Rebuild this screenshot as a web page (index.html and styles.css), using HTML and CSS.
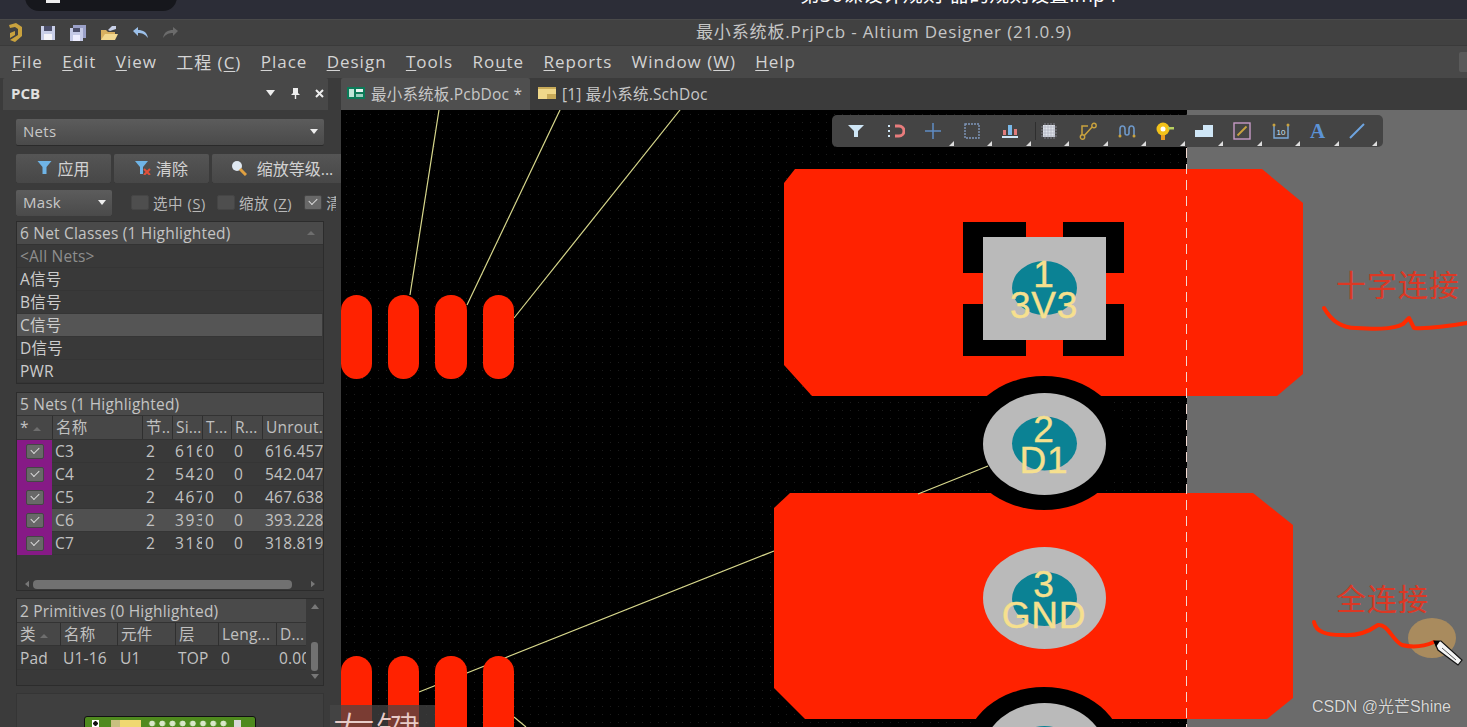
FILE: index.html
```html
<!DOCTYPE html>
<html lang="zh">
<head>
<meta charset="utf-8">
<title>Altium Designer</title>
<link rel="stylesheet" href="styles.css">
</head>
<body>
<div class="app">
  <div class="player">
    <div class="pill"><span class="pill-icon"></span></div>
    <div class="video-title">第30课设计规则-器的规则设置.mp4</div>
  </div>
  <div class="titlebar">
    <div class="quick">
      <svg class="logo" viewBox="0 0 16 20" width="16" height="20"><path d="M2 2 L9 0 L15 4 L15 13 L8 19 L3 17 L11 12 L11 6 L8 4 L3 5Z M3 10 L8 8 L8 12 L3 15Z" fill="#c9a23e"/></svg>
      <svg viewBox="0 0 16 16" width="16" height="16"><rect x="1" y="1" width="14" height="14" fill="#c9cfe8"/><rect x="4" y="1" width="8" height="5" fill="#4c4f6a"/><rect x="4" y="9" width="8" height="6" fill="#f4f4f8"/></svg>
      <svg viewBox="0 0 18 16" width="18" height="16"><rect x="4" y="0" width="13" height="13" fill="#9aa0c8"/><rect x="1" y="3" width="13" height="13" fill="#c4c9e6"/><rect x="4" y="3" width="7" height="4" fill="#4c4f6a"/><rect x="4" y="10" width="7" height="6" fill="#eef"/></svg>
      <svg viewBox="0 0 18 16" width="18" height="16"><path d="M1 5 H6 L8 7 H15 V15 H1Z" fill="#d8b060"/><path d="M5 9 H18 L15 15 H1Z" fill="#f2d890"/><path d="M8 5 L12 1 H16 V4 L10 6Z" fill="#c8d0e8"/></svg>
      <svg viewBox="0 0 18 14" width="18" height="14"><path d="M2 5 L7 1 V4 C12 4 16 6 17 12 C14 8 11 7 7 7 V10Z" fill="#9cc0ea"/></svg>
      <svg viewBox="0 0 18 14" width="18" height="14"><path d="M16 5 L11 1 V4 C6 4 2 6 1 12 C4 8 7 7 11 7 V10Z" fill="#6b6b6b"/></svg>
    </div>
    <div class="doc-title">最小系统板.PrjPcb - Altium Designer (21.0.9)</div>
  </div>
  <div class="menubar">
    <span class="menu"><u>F</u>ile</span>
    <span class="menu"><u>E</u>dit</span>
    <span class="menu"><u>V</u>iew</span>
    <span class="menu">工程 (<u>C</u>)</span>
    <span class="menu"><u>P</u>lace</span>
    <span class="menu"><u>D</u>esign</span>
    <span class="menu"><u>T</u>ools</span>
    <span class="menu">Ro<u>u</u>te</span>
    <span class="menu"><u>R</u>eports</span>
    <span class="menu">Window (<u>W</u>)</span>
    <span class="menu"><u>H</u>elp</span>
    <span class="menu-end"></span>
  </div>
  <div class="main">
    <aside class="panel">
      <div class="panel-head">
        <span class="panel-name">PCB</span>
        <span class="head-icons">
          <svg viewBox="0 0 9 6" width="9" height="6"><path d="M0 0H9L4.5 6Z" fill="#eee"/></svg>
          <svg viewBox="0 0 9 11" width="9" height="11"><path d="M2 0H7V5L9 7H5.2V11H3.8V7H0L2 5Z" fill="#eee"/></svg>
          <svg viewBox="0 0 9 9" width="9" height="9"><path d="M1 1L8 8M8 1L1 8" stroke="#eee" stroke-width="2"/></svg>
        </span>
      </div>
      <div class="panel-body">
        <div class="select wide"><span>Nets</span><i class="caret"></i></div>
        <div class="btn-row">
          <div class="btn b1"><svg viewBox="0 0 14 13" width="15" height="13"><path d="M0 0H14L9 6V13H5V6Z" fill="#6fb4e6"/></svg>应用</div>
          <div class="btn b2"><svg viewBox="0 0 16 14" width="16" height="14"><path d="M0 0H13L8 6V13H5V6Z" fill="#6fb4e6"/><path d="M9 8L15 14M15 8L9 14" stroke="#e0503a" stroke-width="2"/></svg>清除</div>
          <div class="btn b3"><svg viewBox="0 0 16 16" width="16" height="16"><circle cx="6" cy="6" r="5" fill="#dfe8f2"/><path d="M9 9L15 15" stroke="#e0a040" stroke-width="3"/></svg><span>缩放等级...</span></div>
        </div>
        <div class="opt-row">
          <div class="select mask"><span>Mask</span><i class="caret"></i></div>
          <div class="opt o1"><i class="box"></i><span>选中 (<u>S</u>)</span></div>
          <div class="opt o2"><i class="box"></i><span>缩放 (<u>Z</u>)</span></div>
          <div class="opt o3"><i class="box on"></i><span>清</span></div>
        </div>

        <section class="list classes">
          <div class="list-head"><span>6 Net Classes (1 Highlighted)</span><i class="sort"></i></div>
          <div class="row dim">&lt;All Nets&gt;</div>
          <div class="row">A信号</div>
          <div class="row">B信号</div>
          <div class="row sel">C信号</div>
          <div class="row">D信号</div>
          <div class="row">PWR</div>
        </section>

        <section class="list nets">
          <div class="list-head"><span>5 Nets (1 Highlighted)</span></div>
          <div class="cols net-grid th">
            <span>* <i class="sort"></i></span><span>名称</span><span>节..</span><span>Si...</span><span>T...</span><span>R...</span><span>Unrout.</span>
          </div>
          <div class="cols net-grid tr"><span class="chk"><i class="box on"></i></span><span>C3</span><span>2</span><span>616</span><span>0</span><span>0</span><span>616.457</span></div>
          <div class="cols net-grid tr"><span class="chk"><i class="box on"></i></span><span>C4</span><span>2</span><span>542</span><span>0</span><span>0</span><span>542.047</span></div>
          <div class="cols net-grid tr"><span class="chk"><i class="box on"></i></span><span>C5</span><span>2</span><span>467</span><span>0</span><span>0</span><span>467.638</span></div>
          <div class="cols net-grid tr hl"><span class="chk"><i class="box on"></i></span><span>C6</span><span>2</span><span>393</span><span>0</span><span>0</span><span>393.228</span></div>
          <div class="cols net-grid tr"><span class="chk"><i class="box on"></i></span><span>C7</span><span>2</span><span>318</span><span>0</span><span>0</span><span>318.819</span></div>
          <div class="hscroll">
            <svg viewBox="0 0 5 8" width="5" height="8"><path d="M5 0V8L0 4Z" fill="#777"/></svg>
            <i class="hthumb"></i>
            <svg viewBox="0 0 5 8" width="5" height="8"><path d="M0 0V8L5 4Z" fill="#777"/></svg>
          </div>
        </section>

        <section class="list prims">
          <div class="prim-main">
            <div class="list-head"><span>2 Primitives (0 Highlighted)</span></div>
            <div class="cols prim-grid th"><span>类 <i class="sort"></i></span><span>名称</span><span>元件</span><span>层</span><span>Leng...</span><span>D...</span></div>
            <div class="cols prim-grid tr"><span>Pad</span><span>U1-16</span><span>U1</span><span>TOP</span><span>0</span><span>0.00</span></div>
          </div>
          <div class="vscroll">
            <svg viewBox="0 0 8 5" width="8" height="5"><path d="M0 5H8L4 0Z" fill="#777"/></svg>
            <i class="vthumb"></i>
            <svg viewBox="0 0 8 5" width="8" height="5"><path d="M0 0H8L4 5Z" fill="#777"/></svg>
          </div>
        </section>

        <section class="preview">
          <div class="board">
            <i class="bd-pin"></i><i class="bd-chip"></i><i class="dots"></i><i class="bd-end"></i>
          </div>
        </section>
      </div>
    </aside>

    <div class="work">
      <div class="tabs">
        <div class="tab active">
          <svg viewBox="0 0 18 12" width="18" height="12"><rect width="18" height="12" fill="#0c7a58"/><rect x="2" y="2" width="5" height="8" fill="#bfe6d8"/><rect x="9" y="2" width="7" height="3" fill="#e8f4f0"/><rect x="9" y="7" width="7" height="3" fill="#9bd0c0"/></svg>
          <span>最小系统板.PcbDoc *</span>
        </div>
        <div class="tab">
          <svg viewBox="0 0 18 12" width="18" height="12"><rect width="18" height="12" fill="#f0d88a"/><rect x="0" y="0" width="18" height="2" fill="#c8aa58"/><rect x="9" y="7" width="9" height="5" fill="#c8aa58"/></svg>
          <span>[1] 最小系统.SchDoc</span>
        </div>
      </div>
      <div class="canvas">
        <svg class="pcb" viewBox="341 110 1126 617" width="1126" height="617">
          <defs>
            <pattern id="grid" width="8" height="8" patternUnits="userSpaceOnUse"><rect x="2" y="2" width="1" height="1" fill="#1c1c1c"/></pattern>
          </defs>
          <rect x="341" y="110" width="846" height="617" fill="#000"/>
          <rect x="341" y="110" width="846" height="617" fill="url(#grid)"/>
          <rect x="1187" y="110" width="280" height="617" fill="#6b6b6b"/>

          <g class="rats">
            <line x1="439" y1="110" x2="410" y2="295"/>
            <line x1="560" y1="110" x2="467" y2="305"/>
            <line x1="680" y1="110" x2="514" y2="318"/>
            <line x1="774" y1="551" x2="419" y2="692"/>
            <line x1="514" y1="717" x2="526" y2="727"/>
          </g>

          <g class="red">
            <rect x="341" y="295" width="31" height="84" rx="15.5"/>
            <rect x="388" y="295" width="31" height="84" rx="15.5"/>
            <rect x="435" y="295" width="32" height="84" rx="15.5"/>
            <rect x="483" y="295" width="31" height="84" rx="15.5"/>
            <rect x="341" y="656" width="31" height="100" rx="15.5"/>
            <rect x="388" y="656" width="31" height="100" rx="15.5"/>
            <rect x="435" y="656" width="32" height="100" rx="15.5"/>
            <rect x="483" y="656" width="31" height="100" rx="15.5"/>
            <path d="M795 169H1262L1303 203V374L1277 396H812L784 365V183Z"/>
            <path d="M790 493H1253L1293 525V698L1267 719H805L774 688V508Z"/>
          </g>

          <g class="clear">
            <ellipse cx="1044" cy="443" rx="80" ry="67"/>
            <ellipse cx="1044" cy="754" rx="80" ry="67"/>
            <rect x="963" y="222" width="161" height="134"/>
          </g>
          <rect class="cross" x="1026" y="222" width="37" height="134"/>
          <rect class="cross" x="963" y="273" width="161" height="31"/>

          <g class="rats"><line x1="988" y1="466" x2="918" y2="494"/></g>

          <rect class="pad" x="983" y="237" width="123" height="103"/>
          <ellipse class="pad" cx="1044.5" cy="444" rx="61.5" ry="51"/>
          <ellipse class="pad" cx="1044.5" cy="598" rx="61.5" ry="51"/>
          <ellipse class="pad" cx="1044.5" cy="754" rx="61.5" ry="51"/>
          <ellipse class="hole" cx="1044.5" cy="288" rx="32.5" ry="27"/>
          <ellipse class="hole" cx="1044.5" cy="443.5" rx="32.5" ry="27"/>
          <ellipse class="hole" cx="1044.5" cy="599" rx="32.5" ry="27"/>
          <ellipse class="hole" cx="1044.5" cy="753" rx="32.5" ry="27"/>

          <g class="padtxt">
            <text x="1044" y="287">1</text>
            <text x="1044" y="318">3V3</text>
            <text x="1044" y="442">2</text>
            <text x="1044" y="473">D1</text>
            <text x="1044" y="597">3</text>
            <text x="1044" y="628">GND</text>
          </g>

          <line class="edge" x1="1186.5" y1="148" x2="1186.5" y2="727"/>

          <g class="note">
            <text x="1336" y="296">十字连接</text>
            <text x="1336" y="610">全连接</text>
          </g>
          <path class="ink" d="M1324 308C1332 322 1342 328 1356 328C1372 329 1392 330 1403 324L1409 318L1414 328C1430 329 1450 326 1467 323"/>
          <ellipse class="halo" cx="1432" cy="638" rx="24" ry="20"/>
          <path class="ink" d="M1314 622C1316 632 1326 635 1342 635C1358 636 1368 632 1378 625C1388 624 1392 640 1402 645C1414 648 1425 646 1434 642"/>
          <g class="pencil">
            <path d="M1434 641L1441 641L1462 660L1458 665L1438 650Z" fill="#f4f4f4" stroke="#111" stroke-width="1.2"/>
            <path d="M1434 641L1440 641L1436 647Z" fill="#000"/>
            <path d="M1442 648L1456 660" stroke="#555" stroke-width="1"/>
          </g>
        </svg>
        <div class="toolbar">
          <span class="tool"><svg viewBox="0 0 16 14" width="16" height="14"><path d="M0 1H16L10 7V13H6V7Z" fill="#cfe6f6"/></svg></span>
          <span class="tool"><svg viewBox="0 0 18 14" width="18" height="14"><path d="M8 2H12A5 5 0 0 1 12 12H8" fill="none" stroke="#e87c7c" stroke-width="3"/><path d="M1 2H3M1 7H3M1 12H3" stroke="#cfe6f6" stroke-width="2"/></svg></span>
          <span class="tool more"><svg viewBox="0 0 16 16" width="16" height="16"><path d="M8 0V16M0 8H16" stroke="#5f8cc4" stroke-width="1.5"/></svg></span>
          <span class="tool more"><svg viewBox="0 0 16 16" width="16" height="16"><rect x="1" y="1" width="14" height="14" fill="none" stroke="#7f97ba" stroke-width="1.4" stroke-dasharray="2 1"/></svg></span>
          <span class="tool more sep"><svg viewBox="0 0 16 14" width="16" height="14"><rect x="1" y="6" width="3" height="5" fill="#e07c7c"/><rect x="6" y="1" width="4" height="10" fill="#79b8e8"/><rect x="12" y="5" width="3" height="6" fill="#e07c7c"/><rect x="0" y="12" width="16" height="2" fill="#cfe6f6"/></svg></span>
          <span class="tool more"><svg viewBox="0 0 16 16" width="16" height="16"><rect x="2" y="2" width="12" height="12" fill="#dfe4ea"/><path d="M4 0V16M7 0V16M10 0V16M13 0V16M0 4H16M0 7H16M0 10H16M0 13H16" stroke="#aab" stroke-width=".6"/></svg></span>
          <span class="tool more"><svg viewBox="0 0 18 18" width="18" height="18"><path d="M3 15V4H9M4 15L14 4" fill="none" stroke="#c9a23e" stroke-width="1.5"/><circle cx="3.5" cy="15" r="2.2" fill="#444" stroke="#c9a23e" stroke-width="1.4"/><circle cx="15" cy="3.5" r="2.2" fill="#444" stroke="#c9a23e" stroke-width="1.4"/></svg></span>
          <span class="tool more"><svg viewBox="0 0 18 14" width="18" height="14"><path d="M2 11V5Q2 2 4.5 2T7 5V9Q7 11 9 11T11 9V5Q11 2 13.5 2T16 5V11" fill="none" stroke="#6e98c8" stroke-width="1.6"/><circle cx="2" cy="12" r="1.5" fill="#c9a23e"/><circle cx="16" cy="12" r="1.5" fill="#c9a23e"/></svg></span>
          <span class="tool more"><svg viewBox="0 0 18 18" width="18" height="18"><circle cx="7" cy="7" r="6.5" fill="#f2c21a"/><circle cx="7" cy="7" r="2.5" fill="#fff"/><rect x="12" y="5" width="6" height="2.5" fill="#b8d060"/><rect x="5" y="13" width="4" height="5" fill="#e89a20"/></svg></span>
          <span class="tool more"><svg viewBox="0 0 18 12" width="18" height="12"><path d="M0 12V5H8V0H18V12Z" fill="#cfe6f6"/></svg></span>
          <span class="tool more"><svg viewBox="0 0 18 18" width="18" height="18"><rect x="1" y="1" width="16" height="16" fill="#444" stroke="#c79ac6" stroke-width="1.4"/><path d="M4.5 13.5L13.5 4.5" stroke="#c9a23e" stroke-width="1.8"/></svg></span>
          <span class="tool more"><svg viewBox="0 0 18 16" width="18" height="16"><path d="M2 3V15H16V3" fill="none" stroke="#79a8d8" stroke-width="1.4"/><circle cx="2" cy="2" r="1.5" fill="#c9a23e"/><circle cx="16" cy="2" r="1.5" fill="#c9a23e"/><text x="9" y="12" class="mini">10</text></svg></span>
          <span class="tool more letter">A</span>
          <span class="tool more"><svg viewBox="0 0 16 16" width="16" height="16"><path d="M1 15L15 1" stroke="#6ea4e0" stroke-width="2"/></svg></span>
        </div>
        <div class="watermark">CSDN @光芒Shine</div>
      </div>
    </div>
  </div>
  <div class="caption">左键</div>
</div>
</body>
</html>
```
FILE: styles.css
```css
* { box-sizing: border-box; }
html, body { margin: 0; padding: 0; height: 100%; overflow: hidden; background: #3a3a3a; }
body { font-family: "Open Sans", "Noto Sans", "Noto Sans CJK SC", sans-serif; color: #d0d0d0; }
.app { width: 1467px; height: 727px; display: flex; flex-direction: column; overflow: hidden; position: relative; }
u { text-underline-offset: 2px; text-decoration-thickness: 1px; }

.player { height: 19px; background: #2c2d37; position: relative; overflow: hidden; flex: none; }
.pill { position: absolute; left: 25px; top: -20px; width: 152px; height: 31px; background: #16171c; border-radius: 14px; }
.pill-icon { position: absolute; left: 21px; top: 16px; width: 14px; height: 7px; background: #eee; }
.video-title { position: absolute; left: 800px; top: -15px; font-size: 20px; line-height: 20px; color: #fff; white-space: nowrap; }

.titlebar { height: 26px; background: #414141; display: flex; align-items: center; position: relative; flex: none; border-top: 1px solid #4a4a4a; }
.quick { display: flex; align-items: center; gap: 13px; padding-left: 7px; }
.quick .logo { margin-right: 4px; }
.doc-title { position: absolute; left: 696px; top: 1px; font-size: 17px; letter-spacing: .85px; line-height: 22px; color: #c6c6c6; white-space: nowrap; }

.menubar { height: 33px; background: #484848; display: flex; align-items: center; padding: 0 0 2px 12px; gap: 19.3px; font-size: 17px; letter-spacing: 1px; color: #d4d4d4; flex: none; border-top: 1px solid #3a3a3a; position: relative; }
.menu { white-space: nowrap; }
.menu-end { position: absolute; right: 0; top: 6px; width: 8px; height: 20px; background: #5a5a5a; border-radius: 2px 0 0 2px; }

.main { flex: 1; display: flex; min-height: 0; }
.panel { width: 341px; flex: none; background: #3b3b3b; padding-right: 16px; }
.panel-head { height: 32px; background: #484848; width: 325px; margin-left: 3px; display: flex; align-items: center; justify-content: space-between; padding: 0 4px 2px 8px; border-radius: 2px 2px 0 0; }
.panel-name { font-size: 15px; font-weight: 700; color: #e0e0e0; }
.head-icons { display: flex; align-items: center; gap: 15.5px; }
.panel-body { padding-left: 16px; width: 341px; overflow: hidden; }

.select { height: 26px; background: linear-gradient(#5c5c5c, #4a4a4a); border-radius: 2px; display: flex; align-items: center; justify-content: space-between; padding: 0 6px 2px 7px; font-size: 15px; letter-spacing: .3px; color: #c8c8c8; box-shadow: 0 1px 0 #2a2a2a; }
.wide { width: 308px; margin-top: 9px; }
.mask { width: 96px; flex: none; }
.caret { width: 0; height: 0; border-left: 4.5px solid transparent; border-right: 4.5px solid transparent; border-top: 5px solid #eee; }

.btn-row { display: flex; gap: 3px; margin-top: 9px; width: 325px; overflow: hidden; }
.btn { height: 29px; background: linear-gradient(#555, #474747); border-radius: 2px; display: flex; align-items: center; justify-content: center; gap: 5px; padding-bottom: 2px; font-size: 16px; color: #d2d2d2; flex: none; box-shadow: 0 1px 0 #2a2a2a; white-space: nowrap; }
.b1 { width: 95px; }
.b2 { width: 95px; }
.b3 { width: 140px; gap: 10px; }

.opt-row { display: flex; align-items: center; margin-top: 7px; height: 26px; width: 320px; overflow: hidden; font-size: 14.5px; }
.opt { display: flex; align-items: center; gap: 4px; padding-bottom: 2px; white-space: nowrap; color: #b8b8b8; flex: none; letter-spacing: .6px; }
.o1 { margin-left: 19px; }
.o2 { margin-left: 11px; }
.o3 { margin-left: 12px; }
.box { display: inline-block; width: 18px; height: 15px; background: #4e4e4e; border-radius: 2px; border: 1px solid #454545; position: relative; flex: none; }
.box.on { background: #686868; }
.box.on::after { content: ""; position: absolute; left: 4px; top: 2px; width: 7px; height: 4px; border-left: 1.5px solid #ddd; border-bottom: 1.5px solid #ddd; transform: rotate(-45deg); }

.list { width: 308px; background: #393939; border: 1px solid #2c2c2c; font-size: 15.5px; letter-spacing: .2px; overflow: hidden; }
.classes { margin-top: 5px; height: 163px; }
.list-head { height: 23px; background: #4a4a4a; display: flex; align-items: center; justify-content: space-between; padding: 0 8px 0 3px; color: #c4c4c4; white-space: nowrap; border-bottom: 1px solid #333; }
.sort { display: inline-block; width: 0; height: 0; border-left: 4px solid transparent; border-right: 4px solid transparent; border-bottom: 4px solid #6e6e6e; vertical-align: middle; }
.row { height: 23px; line-height: 22px; padding-left: 3px; color: #cccccc; border-bottom: 1px solid #353535; }
.row.dim { color: #8e8e8e; }
.row.sel { background: #555; margin-right: 1px; }

.nets { margin-top: 8px; height: 199px; }
.cols { display: grid; height: 23px; align-items: center; white-space: nowrap; }
.cols > span { overflow: hidden; height: 23px; line-height: 23px; padding-left: 3px; }
.net-grid { grid-template-columns: 35px 90px 30px 30px 29px 31px 1fr; }
.net-grid.th { background: #474747; color: #c0c0c0; border-bottom: 1px solid #333; height: 24px; }
.net-grid.th > span + span { border-left: 1px solid #2f2f2f; }
.tr { color: #c2c2c2; border-bottom: 1px solid #353535; }
.tr.hl { background: #505050; }
.chk { background: #861a86; padding-left: 0 !important; display: flex; align-items: center; justify-content: center; }
.net-grid.tr > span:nth-child(n+3) { padding-left: 3px; }
.net-grid.tr > span:nth-child(3) { padding-left: 4px; }
.net-grid.tr > span:nth-child(4) { letter-spacing: 1.6px; }
.hscroll { height: 14px; margin-top: 22px; display: flex; align-items: center; gap: 6px; padding: 0 8px; }
.hthumb { flex: none; width: 259px; height: 9px; background: #717171; border-radius: 4px; margin-left: -2px; margin-right: 13px; }

.prims { margin-top: 7px; height: 88px; display: flex; }
.prim-main { width: 289px; flex: none; }
.prim-main .list-head { height: 24px; }
.prim-grid { grid-template-columns: 43px 57px 58px 43px 58px 30px; }
.prim-grid.th { background: #474747; color: #c0c0c0; border-bottom: 1px solid #333; }
.prim-grid.th > span + span { border-left: 1px solid #2f2f2f; }
.prim-grid.tr { margin-top: 1px; }
.vscroll { flex: 1; display: flex; flex-direction: column; align-items: center; padding-top: 5px; }
.vthumb { width: 7px; height: 29px; background: #717171; border-radius: 3px; margin-top: 33px; margin-bottom: 3px; }

.preview { width: 308px; height: 40px; margin-top: 7px; background: #3f3f3f; border: 1px solid #353535; border-bottom: 0; display: flex; justify-content: center; padding-top: 22px; }
.board { width: 172px; height: 20px; background: #4f8a1e; border: 1px solid #111; border-radius: 3px 3px 0 0; display: flex; align-items: flex-start; padding: 3px 0 0 7px; position: relative; }
.bd-pin { width: 7px; height: 7px; background: radial-gradient(circle, #111 2px, #fff 2.5px); flex: none; }
.bd-chip { width: 30px; height: 7px; background: linear-gradient(90deg, #c8c080 30%, #f0d870 30%); margin-left: 12px; flex: none; }
.dots { width: 82px; height: 7px; background: radial-gradient(circle, #d8e8c8 2.6px, transparent 3.2px) 0 0 / 10.2px 7px; margin-left: 6px; flex: none; }
.bd-end { width: 7px; height: 7px; background: #d8d8d8; margin-left: 5px; flex: none; }

.work { flex: 1; min-width: 0; display: flex; flex-direction: column; }
.tabs { height: 32px; background: #3b3b3b; display: flex; align-items: flex-end; flex: none; gap: 0; }
.tab { height: 32px; display: flex; align-items: center; gap: 6px; padding: 0 8px 2px; font-size: 15.5px; letter-spacing: .2px; color: #c8c8c8; white-space: nowrap; }
.tab.active { width: 189px; padding-left: 6px; background: #4f4f4f; border-radius: 2px 2px 0 0; }
.tab svg { flex: none; }

.canvas { flex: 1; position: relative; overflow: hidden; background: #000; }
.pcb { display: block; font-family: "Liberation Sans", sans-serif; }
.rats line { stroke: #d8d88c; stroke-width: 1.2; }
.red { fill: #ff2200; }
.clear { fill: #000; }
.cross { fill: #ff2200; }
.pad { fill: #bababa; }
.hole { fill: #0b8294; }
.padtxt text { fill: #f6e08e; stroke: #f6e08e; stroke-width: .4; font-size: 37px; letter-spacing: .8px; text-anchor: middle; }
.edge { stroke: #f2d8d0; stroke-width: 1; stroke-dasharray: 10 6; }
.note text { fill: #f03018; font-size: 30px; letter-spacing: 1px; font-family: "Noto Sans CJK SC", sans-serif; opacity: .85; }
.ink { fill: none; stroke: #ff2a00; stroke-width: 4; stroke-linecap: round; stroke-linejoin: round; }
.halo { fill: #a98b5e; }

.caption { position: absolute; left: 330px; top: 705px; width: 105px; height: 22px; background: rgba(70, 70, 70, .72); color: #e8ccc8; font-size: 44px; line-height: 52px; padding-left: 2px; font-family: "Noto Sans CJK SC", sans-serif; font-weight: 300; overflow: hidden; white-space: nowrap; }

.toolbar { position: absolute; left: 491px; top: 5px; width: 551px; height: 32px; background: #444; border-radius: 5px; display: flex; align-items: center; padding-left: 16px; }
.tool { width: 38.5px; height: 32px; flex: none; display: flex; align-items: center; position: relative; }
.tool.more::after { content: ""; position: absolute; right: 10px; bottom: 1px; width: 0; height: 0; border-left: 5px solid transparent; border-bottom: 5px solid #ddd; }
.tool.sep::before { content: ""; position: absolute; right: 5px; top: 7px; height: 18px; width: 1px; background: #2e2e2e; }
.letter { font-family: "Liberation Serif", serif; font-weight: 700; font-size: 21px; color: #5c93d6; }
.mini { font-size: 8px; fill: #cfe6f6; text-anchor: middle; font-family: "Liberation Sans", sans-serif; }

.watermark { position: absolute; right: 16px; bottom: 10px; font-size: 16px; color: #d8d8d8; font-family: "Liberation Sans", "Noto Sans CJK SC", sans-serif; white-space: nowrap; text-shadow: 0 0 1px #333; }
```
